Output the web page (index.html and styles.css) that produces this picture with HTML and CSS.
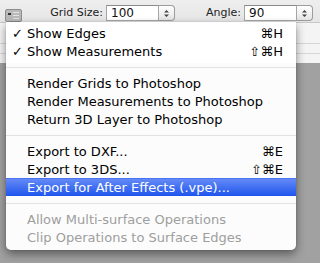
FILE: index.html
```html
<!DOCTYPE html>
<html lang="en">
<head>
    <meta charset="UTF-8">
    <meta name="viewport" content="width=device-width, initial-scale=1.0">
    <title>Vanishing Point menu</title>
    <link rel="stylesheet" href="styles.css">
</head>
<body>
    <!-- Barra de herramientas -->
    <div class="toolbar">
        <div class="menu-button">
            <svg width="17" height="13" viewBox="0 0 17 13">
                <rect x="0.5" y="0.5" width="16" height="12" rx="1.5" fill="#b9b9b9" stroke="#8d8d8d"/>
                <rect x="3" y="4" width="3" height="2" fill="#333"/>
                <line x1="8" y1="3.5" x2="14" y2="3.5" stroke="#e4e4e4"/>
                <line x1="8" y1="6.5" x2="14" y2="6.5" stroke="#e4e4e4"/>
                <line x1="8" y1="9.5" x2="14" y2="9.5" stroke="#e4e4e4"/>
            </svg>
        </div>
        <label class="label label-grid">Grid Size:</label>
        <div class="field field-grid">
            <span class="field-value">100</span>
            <span class="spinner">
                <svg width="7" height="9" viewBox="0 0 7 9">
                    <path d="M1 3.5 L3.5 1 L6 3.5 Z M1 5.5 L3.5 8 L6 5.5 Z" fill="#444"/>
                </svg>
            </span>
        </div>
        <label class="label label-angle">Angle:</label>
        <div class="field field-angle">
            <span class="field-value">90</span>
            <span class="spinner">
                <svg width="7" height="9" viewBox="0 0 7 9">
                    <path d="M1 3.5 L3.5 1 L6 3.5 Z M1 5.5 L3.5 8 L6 5.5 Z" fill="#444"/>
                </svg>
            </span>
        </div>
    </div>

    <!-- Panel detrás del menú -->
    <div class="panel">
        <div class="panel-row panel-row-tall"></div>
        <div class="panel-row"></div>
        <div class="panel-row"></div>
    </div>
    <div class="canvas"></div>

    <!-- Menú desplegable -->
    <div class="menu">
        <div class="item"><span class="check">✓</span><span class="text">Show Edges</span><span class="key">⌘H</span></div>
        <div class="item"><span class="check">✓</span><span class="text">Show Measurements</span><span class="key">⇧⌘H</span></div>
        <div class="separator"></div>
        <div class="item"><span class="check"></span><span class="text">Render Grids to Photoshop</span></div>
        <div class="item"><span class="check"></span><span class="text">Render Measurements to Photoshop</span></div>
        <div class="item"><span class="check"></span><span class="text">Return 3D Layer to Photoshop</span></div>
        <div class="separator"></div>
        <div class="item"><span class="check"></span><span class="text">Export to DXF...</span><span class="key">⌘E</span></div>
        <div class="item"><span class="check"></span><span class="text">Export to 3DS...</span><span class="key">⇧⌘E</span></div>
        <div class="item selected"><span class="check"></span><span class="text">Export for After Effects (.vpe)...</span></div>
        <div class="separator"></div>
        <div class="item disabled"><span class="check"></span><span class="text">Allow Multi-surface Operations</span></div>
        <div class="item disabled"><span class="check"></span><span class="text">Clip Operations to Surface Edges</span></div>
    </div>
</body>
</html>
```

FILE: styles.css
```css
body {
    margin: 0;
    padding: 0;
    width: 320px;
    height: 263px;
    overflow: hidden;
    position: relative;
    background: #a1a1a1;
    font-family: 'DejaVu Sans', 'Lucida Grande', sans-serif;
}
.toolbar {
    height: 22px;
    background: linear-gradient(to bottom, #eeeeee, #e6e6e6);
    display: flex;
    align-items: flex-start;
    padding-left: 5px;
    box-sizing: border-box;
}
.menu-button {
    width: 17px;
    height: 13px;
    margin-top: 9px;
}
.menu-button svg {
    display: block;
}
.label {
    font-size: 11px;
    color: #222;
    text-align: right;
    line-height: 16px;
    margin-top: 5px;
    margin-right: 3px;
}
.label-grid {
    width: 56px;
    margin-left: 25px;
}
.label-angle {
    width: 66px;
}
.field {
    display: flex;
    height: 16px;
    margin-top: 5px;
}
.field-grid {
    width: 69px;
}
.field-angle {
    width: 69px;
}
.field-value {
    flex: 1;
    background: #fff;
    border: 1px solid #a5a5a5;
    border-top-color: #8a8a8a;
    font-size: 12px;
    line-height: 14px;
    padding-left: 4px;
    color: #111;
}
.spinner {
    width: 15px;
    border: 1px solid #9c9c9c;
    border-left: none;
    border-radius: 0 4px 4px 0;
    background: linear-gradient(to bottom, #ffffff, #e4e4e4);
    display: flex;
    justify-content: center;
    align-items: center;
}
.panel {
    background: #f4f4f4;
}
.panel-row {
    height: 9px;
    border-top: 1px solid #d6d6d6;
}
.panel-row-tall {
    height: 20px;
    border-top-color: #c8c8c8;
}
.canvas {
    height: 200px;
}
.menu {
    position: absolute;
    top: 22px;
    left: 6px;
    width: 290px;
    padding: 2px 0 4px;
    background: rgba(255, 255, 255, 0.97);
    border-radius: 0 0 5px 5px;
    box-shadow: 0 4px 10px rgba(0, 0, 0, 0.45), 0 0 1px rgba(0, 0, 0, 0.35);
}
.item {
    display: flex;
    align-items: center;
    height: 18px;
    padding: 0 13px 0 6px;
    font-size: 13px;
    color: #000;
    white-space: nowrap;
}
.check {
    width: 15px;
    font-size: 13px;
}
.text {
    flex: 1;
}
.key {
    text-align: right;
}
.selected {
    height: 17px;
    border-top: 1px solid #4a72f2;
    background: linear-gradient(to bottom, #648af6, #1f55ee);
    color: #fff;
}
.disabled {
    color: #9e9e9e;
}
.separator {
    height: 14px;
    display: flex;
    align-items: center;
}
.separator::after {
    content: '';
    flex: 1;
    height: 1px;
    background: #e2e2e2;
}
```
